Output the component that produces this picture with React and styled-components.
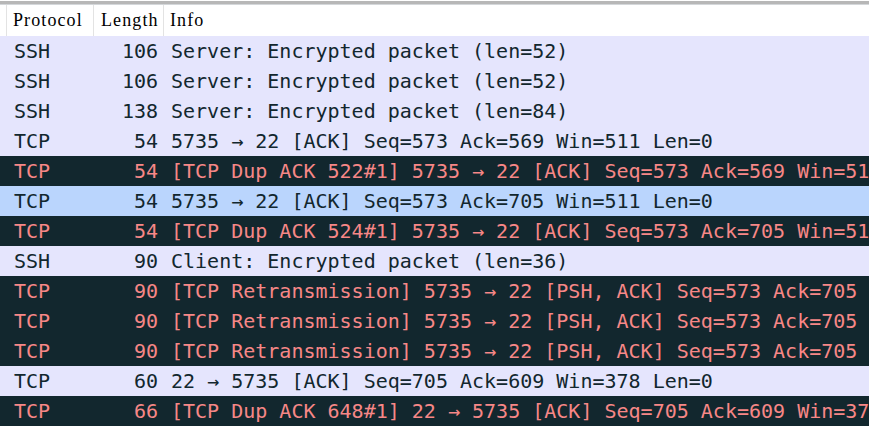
import React from "react";
import styled, { createGlobalStyle } from "styled-components";

const GlobalStyle = createGlobalStyle`
  html, body {
    margin: 0;
    padding: 0;
    background: #ffffff;
    overflow: hidden;
  }
`;

const Wrapper = styled.div`
  width: 869px;
  height: 430px;
  overflow: hidden;
  background: #ffffff;
  padding-top: 1px;
  box-sizing: border-box;
`;

const TopRule = styled.div`
  height: 3px;
  background: #b7b7b7;
  border-bottom: 1px solid #d4d7da;
`;

const HeaderRow = styled.div`
  display: grid;
  grid-template-columns: 6px 88px 70px 1fr;
  height: 31px;
  background: #ffffff;
`;

const HeaderCell = styled.div`
  display: flex;
  align-items: center;
  padding-left: ${(p) => p.$pad || 6}px;
  border-right: ${(p) => (p.$last ? "none" : "1px solid #e3e3e3")};
  font-family: "Liberation Serif", "DejaVu Serif", serif;
  font-size: 18px;
  letter-spacing: 1.1px;
  color: #000000;
  box-sizing: border-box;
  white-space: nowrap;
`;

const Row = styled.div`
  display: grid;
  grid-template-columns: 6px 88px 70px 1fr;
  height: 30px;
  align-items: center;
  background: ${(p) =>
    p.$kind === "bad" ? "#12272e" : p.$kind === "sel" ? "#bad5fd" : "#e5e5fd"};
  color: ${(p) => (p.$kind === "bad" ? "#f78787" : "#12272e")};
  font-family: "DejaVu Sans Mono", "Liberation Mono", monospace;
  font-size: 20px;
  white-space: nowrap;
`;

const Cell = styled.div`
  overflow: hidden;
  padding-left: ${(p) => p.$pad || 0}px;
  padding-right: ${(p) => p.$padR || 0}px;
  text-align: ${(p) => p.$align || "left"};
  box-sizing: border-box;
  line-height: 30px;
`;

const packets = [
  ["SSH", 106, "Server: Encrypted packet (len=52)", "ok"],
  ["SSH", 106, "Server: Encrypted packet (len=52)", "ok"],
  ["SSH", 138, "Server: Encrypted packet (len=84)", "ok"],
  ["TCP", 54, "5735 → 22 [ACK] Seq=573 Ack=569 Win=511 Len=0", "ok"],
  ["TCP", 54, "[TCP Dup ACK 522#1] 5735 → 22 [ACK] Seq=573 Ack=569 Win=511 Len=0", "bad"],
  ["TCP", 54, "5735 → 22 [ACK] Seq=573 Ack=705 Win=511 Len=0", "sel"],
  ["TCP", 54, "[TCP Dup ACK 524#1] 5735 → 22 [ACK] Seq=573 Ack=705 Win=511 Len=0", "bad"],
  ["SSH", 90, "Client: Encrypted packet (len=36)", "ok"],
  ["TCP", 90, "[TCP Retransmission] 5735 → 22 [PSH, ACK] Seq=573 Ack=705 Win=511 Len=36", "bad"],
  ["TCP", 90, "[TCP Retransmission] 5735 → 22 [PSH, ACK] Seq=573 Ack=705 Win=511 Len=36", "bad"],
  ["TCP", 90, "[TCP Retransmission] 5735 → 22 [PSH, ACK] Seq=573 Ack=705 Win=511 Len=36", "bad"],
  ["TCP", 60, "22 → 5735 [ACK] Seq=705 Ack=609 Win=378 Len=0", "ok"],
  ["TCP", 66, "[TCP Dup ACK 648#1] 22 → 5735 [ACK] Seq=705 Ack=609 Win=378 Len=0", "bad"],
];

export default function App() {
  return (
    <Wrapper>
      <GlobalStyle />
      <TopRule />
      <HeaderRow>
        <HeaderCell />
        <HeaderCell $pad={7}>Protocol</HeaderCell>
        <HeaderCell $pad={7}>Length</HeaderCell>
        <HeaderCell $pad={6} $last>Info</HeaderCell>
      </HeaderRow>
      {packets.map(([proto, len, info, kind], i) => (
        <Row key={i} $kind={kind}>
          <Cell />
          <Cell $pad={8}>{proto}</Cell>
          <Cell $align="right" $padR={6}>{len}</Cell>
          <Cell $pad={7}>{info}</Cell>
        </Row>
      ))}
    </Wrapper>
  );
}
